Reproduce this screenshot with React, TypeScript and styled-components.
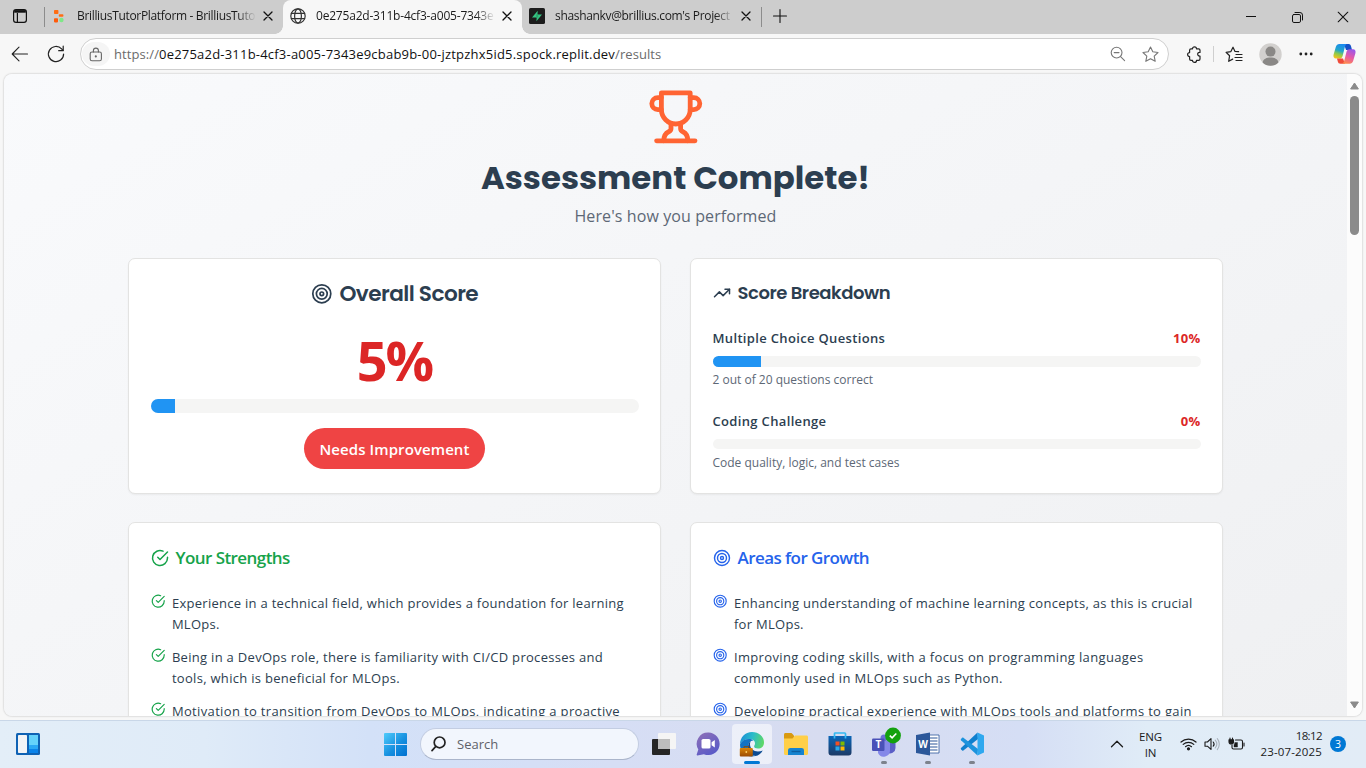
import React from 'react';
import styled, { createGlobalStyle } from 'styled-components';

const GlobalStyle = createGlobalStyle`
  *, *::before, *::after { box-sizing: border-box; }
  html, body { margin: 0; padding: 0; }
  body { font-family: "Segoe UI", "Open Sans", "Noto Sans", sans-serif; overflow: hidden; }
  svg { display: block; flex: none; overflow: visible; }
`;

const Screen = styled.div`
  width: 1366px;
  height: 768px;
  display: flex;
  flex-direction: column;
  overflow: hidden;
  background: #f7f7f7;
`;

/* ---------- Browser chrome ---------- */

const TabStrip = styled.div`
  flex: none;
  height: 34px;
  display: flex;
  align-items: stretch;
  background: #cdcdcd;
`;

const WorkspaceButton = styled.div`
  width: 44px;
  display: flex;
  align-items: center;
  padding: 0 0 2px 13px;
`;

const StripDivider = styled.div`
  width: 1px;
  height: 20px;
  margin-top: 7px;
  background: #8c8c8c;
`;

const Tab = styled.div<{ $width: number; $inset: number; $active?: boolean }>`
  position: relative;
  width: ${(p) => p.$width}px;
  padding: 0 10px 2px ${(p) => p.$inset}px;
  display: flex;
  align-items: center;
  background: ${(p) => (p.$active ? '#f7f7f7' : 'transparent')};
  border-radius: 8px 8px 0 0;

  &::before, &::after {
    content: ${(p) => (p.$active ? '""' : 'none')};
    position: absolute;
    bottom: 0;
    width: 8px;
    height: 8px;
  }
  &::before {
    left: -8px;
    background: radial-gradient(circle at 0 0, #cdcdcd 7.5px, #f7f7f7 8px);
  }
  &::after {
    right: -8px;
    background: radial-gradient(circle at 100% 0, #cdcdcd 7.5px, #f7f7f7 8px);
  }
`;

const TabTitle = styled.span<{ $gap: number; $tracking?: number }>`
  flex: 1;
  min-width: 0;
  margin: 0 7px 0 ${(p) => p.$gap}px;
  overflow: hidden;
  white-space: nowrap;
  font-size: 12px;
  line-height: 18px;
  letter-spacing: ${(p) => p.$tracking ?? -0.33}px;
  color: #1b1b1b;
  mask-image: linear-gradient(to right, #000 calc(100% - 19px), transparent);
`;

const NewTab = styled.div`
  width: 36px;
  padding: 0 0 2px 11px;
  display: flex;
  align-items: center;
`;

const WindowControls = styled.div`
  margin-left: auto;
  display: flex;
  align-items: center;
`;

const WindowButton = styled.div`
  width: 46px;
  height: 34px;
  display: flex;
  align-items: center;
  justify-content: center;
`;

const Toolbar = styled.div`
  flex: none;
  height: 40px;
  padding: 0 2px 0 11px;
  display: flex;
  align-items: center;
`;

const NavButton = styled.div<{ $width: number }>`
  width: ${(p) => p.$width}px;
  display: flex;
  align-items: center;
`;

const AddressBar = styled.div`
  width: 1089px;
  height: 32px;
  padding: 0 9px 0 1px;
  display: flex;
  align-items: center;
  border: 1px solid #cfcfcf;
  border-radius: 16px;
  background: #fff;
`;

const LockBadge = styled.div`
  width: 28px;
  height: 24px;
  display: flex;
  align-items: center;
  justify-content: center;
  border-radius: 12px;
  background: #f5f5f5;
`;

const Address = styled.div`
  flex: 1;
  margin-left: 4px;
  font-size: 13px;
  line-height: 20px;
  letter-spacing: 0.08px;
  color: #6b6b6b;
  white-space: nowrap;
`;

const Host = styled.span`
  color: #111;
  letter-spacing: 0.21px;
`;

const AddressActions = styled.div`
  display: flex;
  gap: 16px;
`;

const ToolbarSlot = styled.div<{ $width?: number }>`
  width: ${(p) => p.$width ?? 36}px;
  height: 32px;
  display: flex;
  align-items: center;
  justify-content: center;
`;

const ToolbarActions = styled.div`
  margin-left: auto;
  display: flex;
  align-items: center;
`;

const ToolbarDivider = styled.div`
  width: 1px;
  height: 16px;
  margin-right: 2px;
  background: #cfcfcf;
`;

/* ---------- Page ---------- */

const Viewport = styled.div`
  flex: none;
  width: 1358px;
  height: 642px;
  margin: 0 0 0 4px;
  display: flex;
  border-radius: 8px;
  overflow: hidden;
  box-shadow: 0 0 2px rgba(0, 0, 0, 0.3);
`;

const Page = styled.main`
  flex: 1;
  min-width: 0;
  overflow: hidden;
  display: flex;
  flex-direction: column;
  align-items: center;
  background: linear-gradient(150deg, #f9fafc 0%, #f4f5f7 50%, #eff0f2 100%);
`;

const Hero = styled.header`
  flex: none;
  height: 184px;
  padding-top: 14px;
  display: flex;
  flex-direction: column;
  align-items: center;
`;

const HeroTitle = styled.h1`
  margin: 12px 0 0;
  font: 700 32.4px/40px Poppins, Inter, sans-serif;
  color: #2c3e50;
`;

const HeroText = styled.p`
  margin: 6px 0 0;
  font-size: 16px;
  line-height: 24px;
  letter-spacing: 0.1px;
  color: #5d6876;
`;

const CardGrid = styled.div`
  flex: none;
  width: 1095px;
  display: grid;
  grid-template-columns: 533px 533px;
  grid-template-rows: 236px 300px;
  gap: 28px 29px;
`;

const Card = styled.section`
  padding: 21px 21.5px;
  display: flex;
  flex-direction: column;
  border: 1px solid #e3e3e2;
  border-radius: 7px;
  background: #fff;
  box-shadow: 0 1px 2px rgba(0, 0, 0, 0.05);
`;

const CardTitle = styled.h2`
  margin: 0;
  height: 26px;
  display: flex;
  align-items: center;
  gap: 7px;
  color: #2c3e50;
  font: 600 18px/26px Poppins, Inter, sans-serif;
  letter-spacing: -0.45px;
`;

const ScoreTitle = styled(CardTitle)`
  justify-content: center;
  margin-top: 1px;
  font-size: 21.6px;
  letter-spacing: -0.54px;
`;

const ListTitle = styled(CardTitle)<{ $tone: string }>`
  margin-top: 1px;
  color: ${(p) => p.$tone};
  font: 600 17px/26px "Segoe UI", "Open Sans", sans-serif;
  letter-spacing: -0.57px;
`;

const ScoreValue = styled.div`
  height: 54px;
  margin-top: 26px;
  text-align: center;
  font-size: 54px;
  line-height: 54px;
  font-weight: 700;
  letter-spacing: -2px;
  color: #dc2626;
`;

const Track = styled.div<{ $height: number }>`
  flex: none;
  height: ${(p) => p.$height}px;
  overflow: hidden;
  border-radius: 7px;
  background: #f5f5f4;
`;

const Fill = styled.div<{ $percent: number }>`
  width: ${(p) => p.$percent}%;
  height: 100%;
  background: #2094f3;
`;

const ScoreTrack = styled(Track)`
  margin-top: 12px;
`;

const Verdict = styled.div`
  align-self: center;
  margin-top: 15px;
  width: 181px;
  height: 41px;
  border-radius: 21px;
  background: #ef4444;
  color: #fff;
  text-align: center;
  font-size: 15px;
  font-weight: 600;
  line-height: 43px;
  letter-spacing: 0.09px;
`;

const Metrics = styled.div`
  margin-top: 21px;
`;

const Metric = styled.div`
  height: 83px;
  display: flex;
  flex-direction: column;
`;

const MetricHead = styled.div`
  height: 22px;
  margin-bottom: 7px;
  display: flex;
  justify-content: space-between;
  color: #2c3e50;
  font-size: 13px;
  font-weight: 600;
  line-height: 22px;
  letter-spacing: 0.34px;
`;

const MetricScore = styled.span`
  color: #dc2626;
  font-weight: 700;
`;

const MetricNote = styled.div`
  margin-top: auto;
  padding-bottom: 21px;
  color: #5d6876;
  font-size: 12px;
  line-height: 18px;
`;

const PointList = styled.ul`
  list-style: none;
  margin: 22px 0 0;
  padding: 0;
  display: flex;
  flex-direction: column;
  gap: 12px;
`;

const Point = styled.li<{ $tone: string }>`
  height: 42px;
  display: flex;
  gap: 7px;
  color: ${(p) => p.$tone};

  svg { margin-top: 1px; }
`;

const PointText = styled.span<{ $tracking: number }>`
  color: #2c3e50;
  font-size: 13px;
  line-height: 21px;
  letter-spacing: ${(p) => p.$tracking}px;
  white-space: pre-line;
`;

const Scrollbar = styled.div`
  width: 15px;
  padding: 8px 0 7px;
  display: flex;
  flex-direction: column;
  align-items: center;
  background: #fcfcfc;
`;

const Thumb = styled.div`
  width: 9px;
  height: 139px;
  margin: 6px 0 auto;
  border-radius: 5px;
  background: #8b8b8b;
`;

/* ---------- Taskbar ---------- */

const Taskbar = styled.footer`
  flex: none;
  height: 48px;
  margin-top: 4px;
  padding: 0 20px 1px 16px;
  display: flex;
  align-items: center;
  border-top: 1px solid #c9d7e8;
  background: linear-gradient(90deg, #e3eef8 0%, #dfebf8 15%, #d3e1f8 27%, #d6def5 45%, #d7dcf0 60%, #d5def5 75%, #e0ecf7 84%, #e2ecf6 100%);
`;

const AppRow = styled.div`
  margin-left: 344px;
  display: flex;
  align-items: center;
`;

const SearchBox = styled.div`
  width: 219px;
  height: 32px;
  margin: 0 3px 0 13px;
  padding-left: 10px;
  display: flex;
  align-items: center;
  gap: 11px;
  border: 1px solid #c3cde2;
  border-bottom-color: #aab5cb;
  border-radius: 16px;
  background: #f2f6fd;
  color: #5f6269;
  font-size: 13px;
`;

const AppSlot = styled.div<{ $open?: boolean }>`
  position: relative;
  width: 40px;
  height: 40px;
  margin: 0 2px;
  display: flex;
  align-items: center;
  justify-content: center;
  border-radius: 4px;
  background: ${(p) => (p.$open ? 'rgba(255,255,255,.55)' : 'transparent')};
`;

const RunMark = styled.span<{ $focused?: boolean }>`
  position: absolute;
  left: 50%;
  bottom: 0;
  width: ${(p) => (p.$focused ? 16 : 6)}px;
  height: 3px;
  border-radius: 2px;
  transform: translateX(-50%);
  background: ${(p) => (p.$focused ? '#0078d4' : '#7d828c')};
`;

const Tray = styled.div`
  margin-left: auto;
  display: flex;
  align-items: center;
  color: #1b1b1b;
  font-size: 11.5px;
  line-height: 16px;
`;

const Language = styled.div`
  width: 30px;
  margin: 2px 0 0 11px;
  text-align: center;
  letter-spacing: -0.1px;
`;

const StatusIcons = styled.div`
  margin-left: 15px;
  display: flex;
  align-items: center;
  gap: 7px;
`;

const Clock = styled.div`
  margin-left: 15px;
  text-align: right;
  letter-spacing: 0.15px;
`;

const ClockTime = styled.div`
  letter-spacing: -0.6px;
`;

const NoticeCount = styled.div`
  width: 16px;
  height: 16px;
  margin-left: 8px;
  border-radius: 50%;
  background: #0078d4;
  color: #fff;
  text-align: center;
  font-size: 10.5px;
  line-height: 16px;
`;

/* ---------- Icons ---------- */

const stroke = {
  fill: 'none',
  stroke: 'currentColor',
  strokeLinecap: 'round' as const,
  strokeLinejoin: 'round' as const,
};

const TargetIcon = ({ size }: { size: number }) => (
  <svg width={size} height={size} viewBox="0 0 24 24" {...stroke} strokeWidth={1.9}>
    <circle cx="12" cy="12" r="10" />
    <circle cx="12" cy="12" r="6" />
    <circle cx="12" cy="12" r="2" />
  </svg>
);

const CheckIcon = ({ size }: { size: number }) => (
  <svg width={size} height={size} viewBox="0 0 24 24" {...stroke} strokeWidth={2}>
    <path d="M22 11.08V12a10 10 0 1 1-5.93-9.14" />
    <path d="m9 11 3 3L22 4" />
  </svg>
);

const TrendIcon = () => (
  <svg width="18" height="18" viewBox="0 0 24 24" {...stroke} strokeWidth={2}>
    <path d="M22 7 13.5 15.5 8.5 10.5 2 17" />
    <path d="M16 7h6v6" />
  </svg>
);

const TrophyIcon = () => (
  <svg width="57.6" height="57.6" viewBox="0 0 24 24" {...stroke} stroke="#ff6433" strokeWidth={2}>
    <path d="M6 9H4.5a2.5 2.5 0 0 1 0-5H6" />
    <path d="M18 9h1.5a2.5 2.5 0 0 0 0-5H18" />
    <path d="M4 22h16" />
    <path d="M10 14.66V17c0 .55-.47.98-.97 1.21C7.85 18.75 7 20.24 7 22" />
    <path d="M14 14.66V17c0 .55.47.98.97 1.21C16.15 18.75 17 20.24 17 22" />
    <path d="M18 2H6v7a6 6 0 0 0 12 0V2Z" />
  </svg>
);

const WorkspaceIcon = () => (
  <svg width="14" height="14" viewBox="0 0 14 14" fill="none" stroke="#111" strokeWidth="1.2">
    <rect x=".6" y=".6" width="12.8" height="12.8" rx="2.4" />
    <path d="M1.2 2.4h11.6" strokeWidth="2.6" />
    <path d="M4.4 4v9" />
  </svg>
);

const BuilderFavicon = () => (
  <svg width="11" height="13" viewBox="0 0 11 13">
    <rect x="1" width="4.4" height="4" rx=".8" fill="#ff6d14" />
    <rect x="5.8" y="4.2" width="4.6" height="2.6" rx=".8" fill="#ff6d14" />
    <rect x="1" y="8.2" width="4" height="4.2" rx=".8" fill="#ff5a0a" />
    <circle cx="8.4" cy="10" r="2.2" fill="#7ee787" />
  </svg>
);

const GlobeIcon = () => (
  <svg width="16" height="16" viewBox="0 0 16 16" {...stroke} stroke="#333" strokeWidth="1.2">
    <circle cx="8" cy="8" r="7.2" />
    <ellipse cx="8" cy="8" rx="3.4" ry="7.2" />
    <path d="M1.4 5.4h13.2M1.4 10.6h13.2" />
  </svg>
);

const BoltFavicon = () => (
  <svg width="16" height="16" viewBox="0 0 16 16">
    <rect width="16" height="16" rx="1.6" fill="#1c1c1c" />
    <path d="M8.7 2.8 3 9.6h5.2z" fill="#35c382" />
    <path d="M7.4 13.2 13 6.4H8z" fill="#35c382" />
    <path d="M7.2 6.4h2v3.2h-2z" fill="#2aa56c" />
  </svg>
);

const CloseIcon = ({ size, weight }: { size: number; weight: number }) => (
  <svg width={size} height={size} viewBox="0 0 10 10" {...stroke} stroke="#111" strokeWidth={weight}>
    <path d="M1 1l8 8M9 1 1 9" />
  </svg>
);

const PlusIcon = () => (
  <svg width="14" height="14" viewBox="0 0 14 14" {...stroke} stroke="#111" strokeWidth="1.1">
    <path d="M7 .5v13M.5 7h13" />
  </svg>
);

const MinimizeIcon = () => (
  <svg width="10" height="10" viewBox="0 0 10 10" stroke="#111">
    <path d="M0 4.5h10" />
  </svg>
);

const RestoreIcon = () => (
  <svg width="11" height="11" viewBox="0 0 11 11" {...stroke} stroke="#111">
    <rect x=".5" y="2.5" width="8" height="8" rx="1.4" />
    <path d="M3 .5h4.900a2.600 2.600 0 0 1 2.600 2.600V8" />
  </svg>
);

const BackIcon = () => (
  <svg width="18" height="16" viewBox="0 0 18 16" {...stroke} stroke="#222" strokeWidth="1.1">
    <path d="M16.5 8H1.2M8 1.2 1.2 8 8 14.8" />
  </svg>
);

const ReloadIcon = () => (
  <svg width="18" height="18" viewBox="0 0 18 18" {...stroke} stroke="#222" strokeWidth="1.2">
    <path d="M16.6 9A7.6 7.6 0 1 1 14.6 3.9L16 5.4" />
    <path d="M16.2 1.2v4.5h-4.5" />
  </svg>
);

const LockIcon = () => (
  <svg width="14" height="15" viewBox="0 0 14 15" {...stroke} stroke="#666" strokeWidth="1.1">
    <rect x="1.2" y="5" width="11.2" height="8.8" rx="1.8" />
    <path d="M4.4 5V3.6a2.5 2.5 0 0 1 5 0V5" />
    <circle cx="6.8" cy="9.4" r=".5" fill="#666" />
  </svg>
);

const ZoomOutIcon = () => (
  <svg width="16" height="16" viewBox="0 0 16 16" {...stroke} stroke="#777" strokeWidth="1.1">
    <circle cx="6.6" cy="6.6" r="5.4" />
    <path d="M4.2 6.6H9M10.6 10.6l4 4" />
  </svg>
);

const StarIcon = () => (
  <svg width="17" height="17" viewBox="0 0 17 17" {...stroke} stroke="#777" strokeWidth="1.1">
    <path d="m8.5 1 2.3 4.8 5.2.7-3.8 3.6 1 5.2-4.7-2.5-4.7 2.5 1-5.2L1 6.5l5.2-.7z" />
  </svg>
);

const ExtensionIcon = () => (
  <svg width="16" height="17" viewBox="0 0 16 17" {...stroke} stroke="#222" strokeWidth="1.2">
    <path d="M6.5 2.8a2 2 0 0 1 4 0H12.600a1.400 1.400 0 0 1 1.400 1.400v2.200c-3-.6-3.200 4 0 3.600v3a1.400 1.400 0 0 1-1.400 1.400h-2.100a2 2 0 0 1-4 0H5A1.400 1.400 0 0 1 3.600 13v-2.400a2 2 0 0 1 0-4V4.200A1.400 1.400 0 0 1 5 2.800z" />
  </svg>
);

const FavoritesIcon = () => (
  <svg width="18" height="17" viewBox="0 0 18 17" {...stroke} stroke="#222" strokeWidth="1.2">
    <path d="M13.6 5.6 10 5.4 8 1.2 5.9 5.6l-4.8.7 3.5 3.4-.9 5.6 4-2.2" />
    <path d="M11 8.5h6M10 11.5h7M11 14.5h6" />
  </svg>
);

const ProfileIcon = () => (
  <svg width="23" height="23" viewBox="0 0 23 23">
    <circle cx="11.5" cy="11.5" r="11.2" fill="#d2d0ce" />
    <circle cx="11.5" cy="8.6" r="5" fill="#8a8886" />
    <path d="M3.6 19.4C4.4 16 7.5 14.6 11.5 14.6s7.1 1.4 7.9 4.8A11.2 11.2 0 0 1 3.6 19.4z" fill="#8a8886" />
  </svg>
);

const MoreIcon = () => (
  <svg width="14" height="4" viewBox="0 0 14 4" fill="#222">
    <circle cx="1.8" cy="2" r="1.4" />
    <circle cx="7" cy="2" r="1.4" />
    <circle cx="12.2" cy="2" r="1.4" />
  </svg>
);

const CopilotIcon = () => (
  <svg width="23" height="22" viewBox="0 0 23 22">
    <defs>
      <linearGradient id="cpLeft" x1="0.6" y1="0" x2="0.3" y2="1">
        <stop offset="0" stopColor="#1b8af0" />
        <stop offset=".45" stopColor="#22a6c9" />
        <stop offset=".7" stopColor="#8fca4a" />
        <stop offset="1" stopColor="#f7c31a" />
      </linearGradient>
      <linearGradient id="cpRight" x1=".7" y1="0" x2=".3" y2="1">
        <stop offset="0" stopColor="#9a57ea" />
        <stop offset=".5" stopColor="#e558a8" />
        <stop offset="1" stopColor="#ff8b4d" />
      </linearGradient>
    </defs>
    <path d="M11 1h4.7c1.5 0 2 1 2.4 2.4l.9 3.6h-6z" fill="#1552c8" />
    <path d="M6.400 1h7.200c-1.200 1-1.600 2.400-2 4L9.600 13c-.5 1.700-1.400 2.600-3 2.600H3C.9 15.600 0 13.800.6 11.600L2.800 4C3.400 2 4.500 1 6.400 1z" fill="url(#cpLeft)" />
    <path d="M12 20.800H7.400c-1.500 0-2.200-.8-2.600-2.200l-.8-3H10z" fill="#ef4b3a" />
    <path d="M16.600 20.800H9.400c1.200-1 1.700-2.400 2.100-4l2-8c.5-1.700 1.500-2.500 3-2.500H20c2.200 0 3 1.700 2.400 4l-2.200 7.500c-.6 2-1.700 3-3.600 3z" fill="url(#cpRight)" />
  </svg>
);

const ScrollArrow = ({ down }: { down?: boolean }) => (
  <svg width="9" height="8" viewBox="0 0 9 8" fill="#8b8b8b" stroke="#8b8b8b" strokeLinejoin="round">
    <path d={down ? 'M.6 1h7.8L4.5 7z' : 'M.6 7h7.8L4.5 1z'} />
  </svg>
);

const WidgetsIcon = () => (
  <svg width="24" height="22" viewBox="0 0 24 22">
    <rect width="24" height="22" rx="1.5" fill="#0f62b4" />
    <rect x="2" y="2" width="9" height="18" rx=".8" fill="#f3f4f6" />
    <path d="M13 2h9v10h-9z" fill="#64d2fb" />
    <path d="M13 12h9v4h-9z" fill="#2aa8f5" />
    <path d="M13 16h9v4h-9z" fill="#0a83ea" />
  </svg>
);

const StartIcon = () => (
  <svg width="23" height="23" viewBox="0 0 23 23">
    <defs>
      <linearGradient id="win" x1="0" y1="0" x2="1" y2="1">
        <stop offset="0" stopColor="#4fcbfb" />
        <stop offset=".55" stopColor="#1690e0" />
        <stop offset="1" stopColor="#0070cf" />
      </linearGradient>
    </defs>
    <path d="M1 0h10v11H0V1a1 1 0 0 1 1-1zM12 0h10a1 1 0 0 1 1 1v10H12zM0 12h11v11H1a1 1 0 0 1-1-1zM12 12h11v10a1 1 0 0 1-1 1H12z" fill="url(#win)" />
  </svg>
);

const SearchIcon = () => (
  <svg width="15" height="16" viewBox="0 0 15 16" {...stroke} stroke="#222" strokeWidth="1.7">
    <circle cx="8.6" cy="6.4" r="5.4" />
    <path d="m4.6 10.6-3.6 4" />
  </svg>
);

const TaskViewIcon = () => (
  <svg width="24" height="22" viewBox="0 0 24 22">
    <rect y="6" width="18" height="16" rx="1" fill="#262626" />
    <rect x="6" width="18" height="16" rx="1" fill="#f5f5f5" />
    <path d="M6 6h12v10H7a1 1 0 0 1-1-1z" fill="#bcbcbc" />
  </svg>
);

const ChatIcon = () => (
  <svg width="24" height="24" viewBox="0 0 24 24">
    <defs>
      <linearGradient id="chat" x1=".2" y1="0" x2=".8" y2="1">
        <stop offset="0" stopColor="#8b6fb8" />
        <stop offset="1" stopColor="#5558c9" />
      </linearGradient>
    </defs>
    <path d="M12.5.5a11.3 11.3 0 1 1-4.6 21.700L1.400 23.400c-.6.1-.9-.4-.7-.9l1.600-5A11.300 11.300 0 0 1 12.500.5z" fill="url(#chat)" />
    <rect x="5.5" y="7" width="9" height="9.6" rx="1.6" fill="#fff" />
    <path d="m15.6 10.3 3.2-2.3v7.6l-3.2-2.3z" fill="#fff" />
  </svg>
);

const EdgeIcon = () => (
  <svg width="26" height="26" viewBox="0 0 26 26">
    <defs>
      <linearGradient id="edgeTop" x1="0" y1=".3" x2="1" y2=".5">
        <stop offset="0" stopColor="#1a8ed6" />
        <stop offset=".5" stopColor="#2bbcc9" />
        <stop offset="1" stopColor="#5fd867" />
      </linearGradient>
      <linearGradient id="case" x1="0" y1="0" x2="0" y2="1">
        <stop offset="0" stopColor="#d98407" />
        <stop offset="1" stopColor="#9a4b03" />
      </linearGradient>
    </defs>
    <path d="M1 13.5C1 6 6.2 1 13 1s12 4.6 12 10.4c0 4-2.6 6.2-6 6.2-2.6 0-3.9-1-3.9-2.3 0-.8.9-1.3.9-2.9 0-2.4-2.3-4.3-5.6-4.300C6 8.100 2.600 10 1 13.500z" fill="url(#edgeTop)" />
    <path d="M1 13.500C2.600 9.900 6 8.100 10 8.100c1.800 0 3.200.5 4.200 1.300-3 .2-5.200 3-5.200 6.600 0 4.700 3.400 8.200 7.600 9-1.200.3-2.400.4-3.600.4C6 25.400 1 20 1 13.500z" fill="#1173c4" />
    <path d="M9 16c0-2.500 1-4.600 2.700-5.700-.6 1-.7 2-.7 3 0 4.200 3.600 7.200 8 7.200 1.800 0 3.300-.4 4.700-1.100-1.700 3.200-4.400 5-7.100 5.600-4.200-.8-7.600-4.300-7.600-9z" fill="#0c4b92" />
    <rect x=".8" y="17" width="13" height="8.6" rx="1" fill="url(#case)" />
    <path d="M5 17v-1.3h4.5V17" fill="none" stroke="#8a4a08" />
    <circle cx="7.3" cy="21" r=".9" fill="#ffd36b" />
  </svg>
);

const FolderIcon = () => (
  <svg width="24" height="22" viewBox="0 0 24 22">
    <path d="M0 1.5C0 .6.6 0 1.5 0h6L10 2.5V7H0z" fill="#d99a10" />
    <path d="M0 5.5h8.5L11 2.6h11.5c.9 0 1.5.6 1.5 1.5v16.400c0 .9-.6 1.500-1.500 1.500h-21C.6 22 0 21.400 0 20.500z" fill="#ffcf48" />
    <path d="M4 22v-4.500C4 15.800 5 15 6.500 15h11c1.500 0 2.500.8 2.500 2.500V22z" fill="#1683cf" />
    <path d="M7.500 18.500h9" stroke="#0d5ea0" strokeWidth="1.4" />
  </svg>
);

const StoreIcon = () => (
  <svg width="24" height="24" viewBox="0 0 24 24">
    <defs>
      <linearGradient id="store" x1="0" y1="0" x2="0" y2="1">
        <stop offset="0" stopColor="#0a66b8" />
        <stop offset="1" stopColor="#1d3a66" />
      </linearGradient>
    </defs>
    <path d="M.5 4h23v16.500a3 3 0 0 1-3 3h-17a3 3 0 0 1-3-3z" fill="url(#store)" />
    <path d="M6.500 6.500V1.800c0-.5.3-.8.8-.8h9.400c.5 0 .8.3.8.8v4.700" fill="none" stroke="#35b9f1" strokeWidth="1.7" />
    <path d="M7.500 9.500h4v4h-4z" fill="#f25022" />
    <path d="M12.500 9.500h4v4h-4z" fill="#7fba00" />
    <path d="M7.500 14.500h4v4h-4z" fill="#28a8ea" />
    <path d="M12.500 14.500h4v4h-4z" fill="#ffb900" />
  </svg>
);

const IconLetter = styled.text`
  font: 700 10px 'Open Sans', sans-serif;
  fill: #fff;
  text-anchor: middle;
`;

const TeamsIcon = () => (
  <svg width="30" height="30" viewBox="0 0 30 30">
    <circle cx="15" cy="9" r="3.5" fill="#6b70d6" />
    <path d="M18 12h8.5v7a5.5 5.5 0 0 1-8.5 4.6z" fill="#5b5fc7" />
    <path d="M9 12h12v9a6.3 6.3 0 0 1-12 3z" fill="#8488e8" />
    <rect x="3" y="9.5" width="12.5" height="12.5" rx="1.2" fill="#4a51b8" />
    <IconLetter x="9.3" y="19.4">T</IconLetter>
    <circle cx="24" cy="6.5" r="7.9" fill="#13a10e" />
    <path d="m20.8 6.7 2.3 2.2 4.2-4.4" fill="none" stroke="#fff" strokeWidth="1.6" />
  </svg>
);

const WordIcon = () => (
  <svg width="24" height="24" viewBox="0 0 24 24">
    <path d="M13 3h10v18H13z" fill="#fff" stroke="#2b579a" strokeWidth=".8" />
    <path d="M14 6h7.5M14 9h7.5M14 12h7.5M14 15h7.5M14 18h7.5" stroke="#2b579a" strokeWidth="1.2" />
    <path d="M0 3 14 .5v23L0 21z" fill="#2b579a" />
    <IconLetter x="7" y="15.6">W</IconLetter>
  </svg>
);

const CodeIcon = () => (
  <svg width="24" height="24" viewBox="0 0 24 24">
    <path d="M17.5.6 1 16c-.4.4-.4.9 0 1.3l1.2 1.1c.4.3.8.3 1.2 0L18 7z" fill="#0f7fce" />
    <path d="M17.5 23.4 1 8.2c-.4-.4-.4-.9 0-1.3l1.2-1.1c.4-.3.8-.3 1.2 0L18 17z" fill="#1c93dd" />
    <path d="M17.5.6 24 3.4v17.200l-6.500 2.800z" fill="#2fa8ef" />
  </svg>
);

const ChevronUpIcon = () => (
  <svg width="14" height="8" viewBox="0 0 14 8" {...stroke} strokeWidth="1.3">
    <path d="M1.5 6.8 7 1.3l5.500 5.500" />
  </svg>
);

const WifiIcon = () => (
  <svg width="17" height="14" viewBox="0 0 17 14" {...stroke} strokeWidth="1.2">
    <path d="M1 5a11 11 0 0 1 15 0M3.2 7.4a7.8 7.8 0 0 1 10.600 0M5.500 9.700a4.500 4.500 0 0 1 6 0" />
    <circle cx="8.5" cy="11.8" r="1" fill="currentColor" />
  </svg>
);

const VolumeIcon = () => (
  <svg width="17" height="14" viewBox="0 0 17 14" {...stroke} strokeWidth="1.1">
    <path d="M1 5v4.200h2.400L7 12.400V1.600L3.400 5z" />
    <path d="M9.200 5a3.200 3.200 0 0 1 0 4.200" />
    <path d="M11.200 3.200a6 6 0 0 1 0 7.800M13.300 1.600a8.600 8.600 0 0 1 0 11" stroke="#a9b1ba" />
  </svg>
);

const BatteryIcon = () => (
  <svg width="17" height="14" viewBox="0 0 17 14" {...stroke} strokeWidth="1.1">
    <path d="M7.500 3h5.500a1.500 1.500 0 0 1 1.500 1.500v6a1.500 1.500 0 0 1-1.500 1.500H5.500A1.500 1.500 0 0 1 4 10.500V8" />
    <path d="M16 6v3" />
    <path d="M7 5.500h2.500v4.500H6V8z" fill="currentColor" strokeWidth=".4" />
    <path d="M1 2.800h4.500v2a2.200 2.200 0 0 1-4.500 0zM2 1v1.500M4.500 1v1.500" fill="currentColor" />
  </svg>
);

/* ---------- Content ---------- */

const GREEN = '#16a34a';
const BLUE = '#2563eb';

const strengths = [
  { tracking: 0.28, text: 'Experience in a technical field, which provides a foundation for learning\nMLOps.' },
  { tracking: 0.3, text: 'Being in a DevOps role, there is familiarity with CI/CD processes and\ntools, which is beneficial for MLOps.' },
  { tracking: 0.35, text: 'Motivation to transition from DevOps to MLOps, indicating a proactive' },
];

const growthAreas = [
  { tracking: 0.29, text: 'Enhancing understanding of machine learning concepts, as this is crucial\nfor MLOps.' },
  { tracking: 0.36, text: 'Improving coding skills, with a focus on programming languages\ncommonly used in MLOps such as Python.' },
  { tracking: 0.33, text: 'Developing practical experience with MLOps tools and platforms to gain' },
];

const metrics = [
  { label: 'Multiple Choice Questions', percent: 10, note: '2 out of 20 questions correct', bar: 11 },
  { label: 'Coding Challenge', percent: 0, note: 'Code quality, logic, and test cases', bar: 10 },
];

export default function App() {
  return (
    <Screen>
      <GlobalStyle />
      <TabStrip>
        <WorkspaceButton><WorkspaceIcon /></WorkspaceButton>
        <StripDivider />
        <Tab $width={238} $inset={8}>
          <BuilderFavicon />
          <TabTitle $gap={13}>BrilliusTutorPlatform - BrilliusTuto</TabTitle>
          <CloseIcon size={10} weight={1.3} />
        </Tab>
        <Tab $width={239} $inset={7} $active>
          <GlobeIcon />
          <TabTitle $gap={10} $tracking={-0.2}>0e275a2d-311b-4cf3-a005-7343e</TabTitle>
          <CloseIcon size={10} weight={1.3} />
        </Tab>
        <Tab $width={239} $inset={7}>
          <BoltFavicon />
          <TabTitle $gap={10}>shashankv@brillius.com's Project</TabTitle>
          <CloseIcon size={10} weight={1.3} />
        </Tab>
        <StripDivider />
        <NewTab><PlusIcon /></NewTab>
        <WindowControls>
          <WindowButton><MinimizeIcon /></WindowButton>
          <WindowButton><RestoreIcon /></WindowButton>
          <WindowButton><CloseIcon size={12} weight={0.9} /></WindowButton>
        </WindowControls>
      </TabStrip>

      <Toolbar>
        <NavButton $width={36}><BackIcon /></NavButton>
        <NavButton $width={33}><ReloadIcon /></NavButton>
        <AddressBar>
          <LockBadge><LockIcon /></LockBadge>
          <Address>
            https://<Host>0e275a2d-311b-4cf3-a005-7343e9cbab9b-00-jztpzhx5id5.spock.replit.dev</Host>/results
          </Address>
          <AddressActions>
            <ZoomOutIcon />
            <StarIcon />
          </AddressActions>
        </AddressBar>
        <ToolbarActions>
          <ToolbarSlot $width={38}><ExtensionIcon /></ToolbarSlot>
          <ToolbarDivider />
          <ToolbarSlot><FavoritesIcon /></ToolbarSlot>
          <ToolbarSlot><ProfileIcon /></ToolbarSlot>
          <ToolbarSlot><MoreIcon /></ToolbarSlot>
          <ToolbarSlot $width={40}><CopilotIcon /></ToolbarSlot>
        </ToolbarActions>
      </Toolbar>

      <Viewport>
        <Page>
          <Hero>
            <TrophyIcon />
            <HeroTitle>Assessment Complete!</HeroTitle>
            <HeroText>Here's how you performed</HeroText>
          </Hero>
          <CardGrid>
            <Card>
              <ScoreTitle>
                <TargetIcon size={21.6} />
                Overall Score
              </ScoreTitle>
              <ScoreValue>5%</ScoreValue>
              <ScoreTrack $height={14}><Fill $percent={5} /></ScoreTrack>
              <Verdict>Needs Improvement</Verdict>
            </Card>
            <Card>
              <CardTitle>
                <TrendIcon />
                Score Breakdown
              </CardTitle>
              <Metrics>
                {metrics.map((m) => (
                  <Metric key={m.label}>
                    <MetricHead>
                      {m.label}
                      <MetricScore>{m.percent}%</MetricScore>
                    </MetricHead>
                    <Track $height={m.bar}><Fill $percent={m.percent} /></Track>
                    <MetricNote>{m.note}</MetricNote>
                  </Metric>
                ))}
              </Metrics>
            </Card>
            <Card>
              <ListTitle $tone={GREEN}>
                <CheckIcon size={18} />
                Your Strengths
              </ListTitle>
              <PointList>
                {strengths.map((s) => (
                  <Point key={s.text} $tone={GREEN}>
                    <CheckIcon size={14.4} />
                    <PointText $tracking={s.tracking}>{s.text}</PointText>
                  </Point>
                ))}
              </PointList>
            </Card>
            <Card>
              <ListTitle $tone={BLUE}>
                <TargetIcon size={18} />
                Areas for Growth
              </ListTitle>
              <PointList>
                {growthAreas.map((s) => (
                  <Point key={s.text} $tone={BLUE}>
                    <TargetIcon size={14.4} />
                    <PointText $tracking={s.tracking}>{s.text}</PointText>
                  </Point>
                ))}
              </PointList>
            </Card>
          </CardGrid>
        </Page>
        <Scrollbar>
          <ScrollArrow />
          <Thumb />
          <ScrollArrow down />
        </Scrollbar>
      </Viewport>

      <Taskbar>
        <WidgetsIcon />
        <AppRow>
          <StartIcon />
          <SearchBox>
            <SearchIcon />
            Search
          </SearchBox>
          <AppSlot><TaskViewIcon /></AppSlot>
          <AppSlot><ChatIcon /></AppSlot>
          <AppSlot $open><EdgeIcon /><RunMark $focused /></AppSlot>
          <AppSlot><FolderIcon /></AppSlot>
          <AppSlot><StoreIcon /></AppSlot>
          <AppSlot><TeamsIcon /><RunMark /></AppSlot>
          <AppSlot><WordIcon /><RunMark /></AppSlot>
          <AppSlot><CodeIcon /><RunMark /></AppSlot>
        </AppRow>
        <Tray>
          <ChevronUpIcon />
          <Language>ENG<br />IN</Language>
          <StatusIcons>
            <WifiIcon />
            <VolumeIcon />
            <BatteryIcon />
          </StatusIcons>
          <Clock>
            <ClockTime>18:12</ClockTime>
            23-07-2025
          </Clock>
          <NoticeCount>3</NoticeCount>
        </Tray>
      </Taskbar>
    </Screen>
  );
}
